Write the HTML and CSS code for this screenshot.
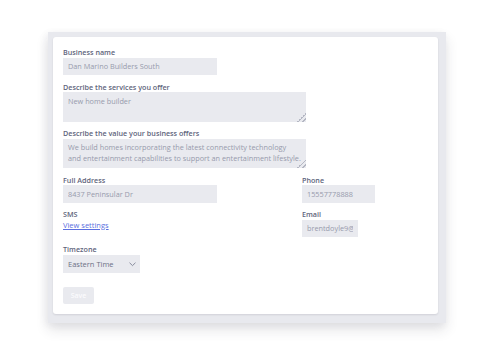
FILE: index.html
```html
<!DOCTYPE html>
<html>
<head>
<meta charset="utf-8">
<link rel="stylesheet" href="styles.css">
</head>
<body>
<div class="frame">
  <form class="card">
    <div class="field full">
      <label class="label">Business name</label>
      <input class="input w-name" type="text" value="Dan Marino Builders South">
    </div>
    <div class="field full">
      <label class="label">Describe the services you offer</label>
      <textarea class="input area">New home builder</textarea>
    </div>
    <div class="field full">
      <label class="label">Describe the value your business offers</label>
      <textarea class="input area">We build homes incorporating the latest connectivity technology and entertainment capabilities to support an entertainment lifestyle.</textarea>
    </div>
    <div class="field">
      <label class="label">Full Address</label>
      <input class="input w-name" type="text" value="8437 Peninsular Dr">
    </div>
    <div class="field">
      <label class="label">Phone</label>
      <input class="input w-phone" type="text" value="15557778888">
    </div>
    <div class="field">
      <label class="label">SMS</label>
      <a class="link" href="#">View settings</a>
    </div>
    <div class="field">
      <label class="label">Email</label>
      <input class="input w-email" type="text" value="brentdoyle9@gmail.com">
    </div>
    <div class="field full tz">
      <label class="label">Timezone</label>
      <div class="select-wrap">
        <select class="input select">
          <option>Eastern Time</option>
        </select>
        <svg class="chev" width="7" height="5" viewBox="0 0 7 5"><path d="M0.8 1 L3.5 3.6 L6.2 1" fill="none" stroke="#7d8194" stroke-width="0.9" stroke-linecap="round" stroke-linejoin="round"/></svg>
      </div>
    </div>
    <div class="full actions">
      <button class="save" type="button">Save</button>
    </div>
  </form>
</div>
</body>
</html>
```

FILE: styles.css
```css
* { box-sizing: border-box; }
html, body { margin: 0; padding: 0; background: #ffffff; }
body {
  font-family: "Open Sans", "DejaVu Sans", sans-serif;
  width: 500px;
  height: 358px;
  overflow: hidden;
}
.frame {
  margin: 32px 0 0 48px;
  width: 398px;
  padding: 5px 8px 9px 5px;
  background: #e8e9ee;
  box-shadow: 0 7px 12px rgba(40, 40, 60, 0.12), -2px 2px 8px rgba(40, 40, 60, 0.06);
}
.card {
  background: #ffffff;
  border-radius: 3px;
  box-shadow: 0 1px 2px rgba(40, 40, 60, 0.12);
  padding: 10px 10px 10px 10px;
  display: grid;
  grid-template-columns: 239px 1fr;
  row-gap: 6.5px;
}
.full { grid-column: 1 / -1; }
.field { display: flex; flex-direction: column; align-items: flex-start; }
.label {
  font-size: 7.2px;
  font-weight: 600;
  line-height: 10.5px;
  height: 10.5px;
  color: #60647b;
}
.input {
  display: block;
  border: none;
  outline: none;
  background: #e9eaef;
  font-family: inherit;
  font-size: 7.3px;
  color: #979aac;
  height: 17.5px;
  padding: 0 5px;
  margin: 0;
  border-radius: 0;
}
.w-name { width: 154px; }
.w-phone { width: 73px; }
.w-email { width: 56px; }
.area {
  width: 243px;
  height: 29.5px;
  padding: 3.5px 5px;
  line-height: 11px;
  resize: both;
  overflow: hidden;
}
.area::-webkit-scrollbar { width: 5px; height: 5px; }
.area::-webkit-resizer {
  background:
    linear-gradient(135deg, transparent 0 70%, #b4b7c3 70% 76%, transparent 76% 86%, #b4b7c3 86% 92%, transparent 92%);
}
.link {
  font-size: 7.5px;
  line-height: 11px;
  color: #5b6fe0;
  text-decoration: underline;
}
.tz .label { margin-bottom: 1px; }
.select-wrap { position: relative; width: 77px; }
.select {
  -webkit-appearance: none;
  appearance: none;
  width: 77px;
  color: #6d7186;
  font-size: 7.5px;
}
.chev { position: absolute; left: 66px; top: 7px; }
.actions { padding-top: 7.5px; }
.save {
  display: block;
  border: none;
  background: #e9eaef;
  color: #fbfbfd;
  font-family: inherit;
  font-size: 7px;
  font-weight: 600;
  width: 31px;
  height: 17px;
  border-radius: 2px;
  padding: 0;
}
```
